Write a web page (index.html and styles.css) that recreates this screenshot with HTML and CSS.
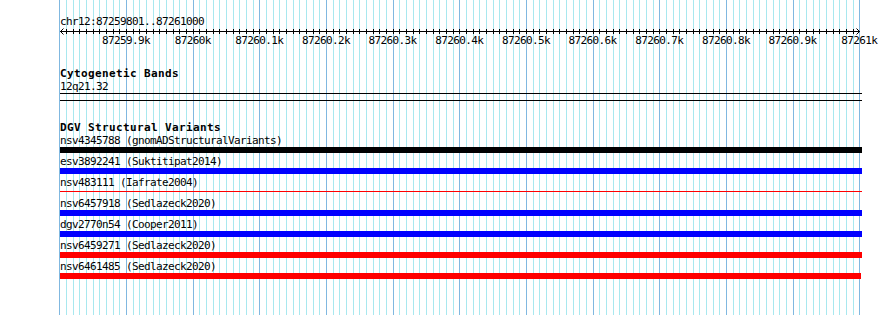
FILE: index.html
```html
<!DOCTYPE html>
<html lang="en">
<head>
    <meta charset="UTF-8">
    <title>chr12:87259801..87261000</title>
    <link rel="stylesheet" href="styles.css">
</head>
<body>

<div class="panel">
    <svg class="grid" id="grid" width="890" height="315"></svg>

    <div class="tracks">
        <div class="range">chr12:87259801..87261000</div>
        <svg class="scale" id="scale" width="802" height="7"></svg>
        <div class="tick-labels" id="tickLabels"></div>

        <div class="track">
            <div class="track-title">Cytogenetic Bands</div>
            <div class="feature-label">12q21.32</div>
            <div class="band"></div>
        </div>

        <div class="track track-dgv">
            <div class="track-title">DGV Structural Variants</div>
            <div class="feature">
                <div class="feature-label">nsv4345788 (gnomADStructuralVariants)</div>
                <div class="bar bar-black"></div>
            </div>
            <div class="feature">
                <div class="feature-label">esv3892241 (Suktitipat2014)</div>
                <div class="bar bar-blue"></div>
            </div>
            <div class="feature">
                <div class="feature-label">nsv483111 (Iafrate2004)</div>
                <div class="bar bar-thin"></div>
            </div>
            <div class="feature">
                <div class="feature-label">nsv6457918 (Sedlazeck2020)</div>
                <div class="bar bar-blue"></div>
            </div>
            <div class="feature">
                <div class="feature-label">dgv2770n54 (Cooper2011)</div>
                <div class="bar bar-blue"></div>
            </div>
            <div class="feature">
                <div class="feature-label">nsv6459271 (Sedlazeck2020)</div>
                <div class="bar bar-red"></div>
            </div>
            <div class="feature">
                <div class="feature-label">nsv6461485 (Sedlazeck2020)</div>
                <div class="bar bar-red bar-short"></div>
            </div>
        </div>
    </div>
</div>

<script>
    const NS = 'http://www.w3.org/2000/svg';
    const pxPerBp = 800 / 1200; // 1200 bp across 800 px
    const originX = 59.333;     // x of 87259800

    const grid = document.getElementById('grid');
    const scale = document.getElementById('scale');
    const tickLabels = document.getElementById('tickLabels');

    function rect(parent, x, y, w, h, cls) {
        const r = document.createElementNS(NS, 'rect');
        r.setAttribute('x', x);
        r.setAttribute('y', y);
        r.setAttribute('width', w);
        r.setAttribute('height', h);
        r.setAttribute('class', cls);
        parent.appendChild(r);
    }

    // grid lines every 10 bp, stronger every 100 bp
    for (let k = 0; k <= 120; k++) {
        const x = Math.round(originX + k * 10 * pxPerBp);
        rect(grid, x, 0, 1, 315, k % 10 === 0 ? 'major' : 'minor');
        if (k > 0 && k < 120) {
            rect(scale, x - 60, 1, 1, 5, 'tick');
        }
    }

    // ruler line with arrow heads
    rect(scale, 0, 3, 800, 1, 'tick');
    const arrows = document.createElementNS(NS, 'path');
    arrows.setAttribute('d', 'M3.5 0.5 L0.5 3.5 L3.5 6.5 M796.5 0.5 L799.5 3.5 L796.5 6.5');
    arrows.setAttribute('class', 'arrow');
    scale.appendChild(arrows);

    // labels every 100 bp
    for (let bp = 87259900; bp <= 87261000; bp += 100) {
        const span = document.createElement('span');
        span.textContent = (bp / 1000) + 'k';
        tickLabels.appendChild(span);
    }
</script>

</body>
</html>
```

FILE: styles.css
```css
body {
    margin: 0;
    background-color: #fff;
    overflow: hidden;
}

.panel {
    display: grid;
    width: 890px;
    height: 315px;
    font-family: "DejaVu Sans Mono", "Liberation Mono", monospace;
    font-size: 11px;
    letter-spacing: -0.62px;
    line-height: 13px;
    color: #000;
}

.grid,
.tracks {
    grid-area: 1 / 1;
}

.grid .minor {
    fill: #a8e8ef;
}

.grid .major {
    fill: #80b8e0;
}

.tracks {
    padding-left: 60px;
}

.range {
    margin-top: 15px;
    white-space: nowrap;
}

.scale {
    display: block;
}

.scale .tick {
    fill: #000;
}

.scale .arrow {
    fill: none;
    stroke: #000;
    stroke-width: 1;
}

.tick-labels {
    display: flex;
    margin-top: -1px;
    margin-left: 32.67px;
    white-space: nowrap;
}

.tick-labels span {
    flex: 0 0 66.667px;
    text-align: center;
}

.track {
    margin-top: 20px;
    width: 802px;
}

.track-title {
    font-weight: bold;
    letter-spacing: 0.38px;
}

.feature-label {
    white-space: nowrap;
}

.band {
    height: 6px;
    border-top: 1px solid #000;
    border-bottom: 1px solid #000;
}

.feature {
    margin-bottom: 2px;
}

.bar {
    height: 6px;
}

.bar-black {
    background-color: #000;
}

.bar-blue {
    background-color: #00f;
}

.bar-red {
    background-color: #f00;
}

.bar-short {
    width: 801px;
}

.bar-thin {
    background: linear-gradient(#f00, #f00) 0 2px / 100% 1px no-repeat;
}
```
